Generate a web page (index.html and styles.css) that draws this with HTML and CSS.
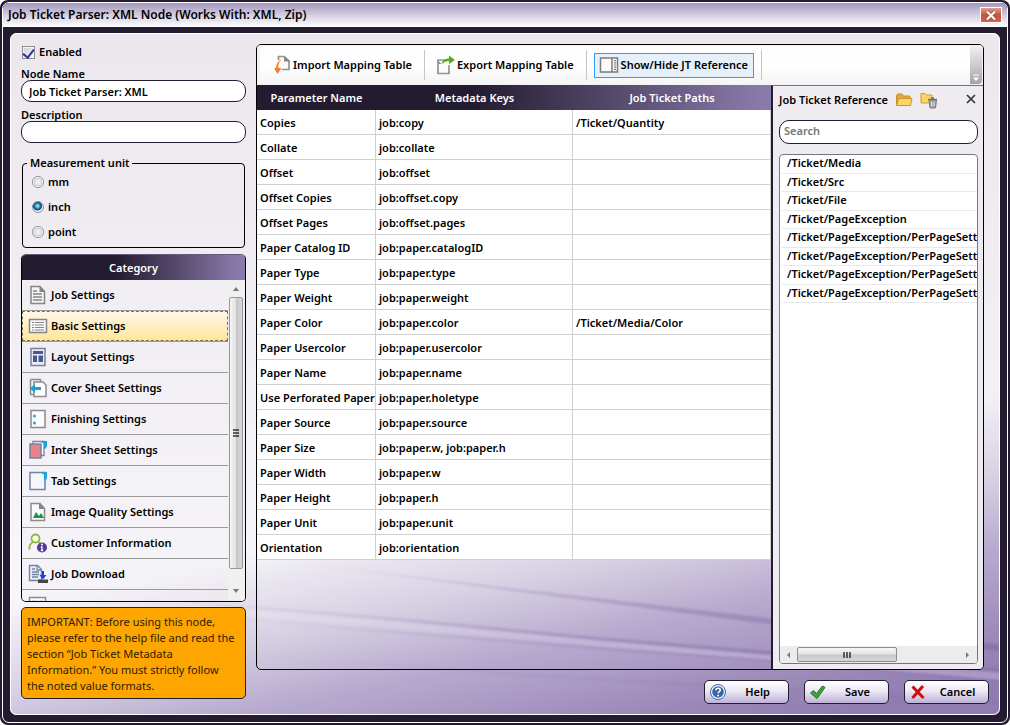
FILE: index.html
```html
<!DOCTYPE html>
<html lang="en">
<head>
<meta charset="utf-8">
<title>Job Ticket Parser: XML Node</title>
<link rel="stylesheet" href="styles.css">
</head>
<body>
<div class="window">
<div class="frame">
  <header class="titlebar">
    <h1>Job Ticket Parser: XML Node (Works With: XML, Zip)</h1>
    <button class="close" type="button" aria-label="Close window"><svg width="12" height="11" viewBox="0 0 12 11"><path d="M2 1.5l8 8M10 1.5l-8 8" stroke="#8a4a44" stroke-width="3.6"/><path d="M2 1.5l8 8M10 1.5l-8 8" stroke="#fff" stroke-width="2.2"/></svg></button>
  </header>

  <main class="content">
    <svg class="backdrop" viewBox="10 33 990 682" preserveAspectRatio="none" aria-hidden="true">
      <defs>
        <linearGradient id="top" x1="0" y1="0" x2="0" y2="1"><stop offset="0" stop-color="#ece7ec"/><stop offset=".35" stop-color="#f0edf2"/><stop offset=".8" stop-color="#f7f6fa"/></linearGradient>
        <linearGradient id="violet" gradientUnits="userSpaceOnUse" x1="0" y1="600" x2="63" y2="886">
          <stop offset="0" stop-color="#f4f3f7" stop-opacity="0"/><stop offset=".1" stop-color="#edeaf2"/><stop offset=".33" stop-color="#d6cfe2"/><stop offset=".55" stop-color="#b8abcf"/><stop offset=".72" stop-color="#a898c3"/><stop offset=".85" stop-color="#9b89b7"/><stop offset="1" stop-color="#917cb2"/>
        </linearGradient>
        <linearGradient id="streak" x1="0" y1="0" x2="1" y2="0"><stop offset="0" stop-color="#8874a8" stop-opacity=".05"/><stop offset="1" stop-color="#7f6ba3" stop-opacity=".65"/></linearGradient>
        <linearGradient id="shine" x1="0" y1="0" x2="1" y2="0"><stop offset="0" stop-color="#fff" stop-opacity=".1"/><stop offset="1" stop-color="#cfc0e4" stop-opacity=".4"/></linearGradient>
        <filter id="soft" x="-5%" y="-20%" width="110%" height="140%"><feGaussianBlur stdDeviation="1.1"/></filter>
      </defs>
      <rect x="10" y="33" width="990" height="682" fill="url(#top)"/>
      <rect x="10" y="33" width="990" height="682" fill="url(#violet)"/>
      <g filter="url(#soft)">
        <path d="M300 563L520 589 760 617 1000 645V651L760 623 520 592Z" fill="url(#streak)"/>
        <path d="M190 601L400 618 600 637 760 650 1000 669V674L760 655 600 641 400 621 190 604Z" fill="url(#streak)"/>
        <path d="M190 605L400 623 600 641 760 654 1000 672V680L760 659 600 646 400 629 190 611Z" fill="url(#shine)"/>
        <path d="M190 615L400 631 600 647 760 659 1000 680V682L760 661 600 650 400 634Z" fill="url(#streak)" opacity=".6"/>
        <path d="M200 650L500 672 1000 701V704L500 675Z" fill="url(#streak)" opacity=".4"/>
      </g>
    </svg>

    <aside class="side">
      <label class="check"><input type="checkbox" checked><span>Enabled</span></label>
      <label class="caption" for="node">Node Name</label>
      <input class="field" id="node" type="text" value="Job Ticket Parser: XML">
      <label class="caption" for="desc">Description</label>
      <input class="field" id="desc" type="text">
      <fieldset class="units">
        <legend>Measurement unit</legend>
        <label><input type="radio" name="unit"><span>mm</span></label>
        <label><input type="radio" name="unit" checked><span>inch</span></label>
        <label><input type="radio" name="unit"><span>point</span></label>
      </fieldset>

      <section class="category">
        <h2>Category</h2>
        <div class="category-body">
          <ul>
            <li><button type="button"><svg viewBox="0 0 20 20"><path d="M3 1.500h9l4.500 5v12H3z" fill="#f4f4f4" stroke="#858585" stroke-width="1.500"/><path d="M11.500 1v6h5.500z" fill="#858585"/><path d="M5 6h4M5 9h9M5 12h9M5 15h9" stroke="#858585" stroke-width="1.500"/></svg>Job Settings</button></li>
            <li><button type="button" class="selected"><svg viewBox="0 0 20 20"><rect x="1.500" y="3.500" width="17" height="13" fill="#fafafa" stroke="#858585" stroke-width="1.500"/><path d="M4 6.500h2M4 9h2M4 11.500h2M4 14h2M7 6.500h9M7 9h9M7 11.500h9M7 14h9" stroke="#858585" stroke-width="1.200"/></svg>Basic Settings</button></li>
            <li><button type="button"><svg viewBox="0 0 20 20"><rect x="3" y="1.500" width="14" height="17" fill="#e8edf5" stroke="#7482a5" stroke-width="1.500"/><path d="M5 4h10v3H5zM5 8.500h4V15H5zM10.500 8.500H15V15h-4.500z" fill="#465a91"/></svg>Layout Settings</button></li>
            <li><button type="button"><svg viewBox="0 0 20 20"><path d="M2.500 1.500h10v2M2.500 1.500v15H7" fill="none" stroke="#8b8b8b" stroke-width="1.500"/><path d="M6 4h9l3 3v11.500H6z" fill="#fff" stroke="#8b8b8b" stroke-width="1.500"/><path d="M2 10.500l5-4.500v3h6v3H7v3z" fill="#259dce"/></svg>Cover Sheet Settings</button></li>
            <li><button type="button"><svg viewBox="0 0 20 20"><rect x="3" y="1.500" width="14" height="17" fill="#fcfcfc" stroke="#8b8b8b" stroke-width="1.500"/><circle cx="6.500" cy="7" r="1.500" fill="#26a2d6"/><circle cx="6.500" cy="14" r="1.500" fill="#26a2d6"/></svg>Finishing Settings</button></li>
            <li><button type="button"><svg viewBox="0 0 20 20"><path d="M5 1.500h11v14H5z" fill="#fff" stroke="#7482a5" stroke-width="1.300"/><path d="M14 1h5v4q0 3-3 4V3h-2z" fill="#22a2da"/><rect x="2" y="4" width="11" height="14" fill="#e78489" stroke="#7482a5" stroke-width="1.500"/></svg>Inter Sheet Settings</button></li>
            <li><button type="button"><svg viewBox="0 0 20 20"><rect x="2" y="1.500" width="15" height="17" fill="#f3f7fc" stroke="#7482a5" stroke-width="1.500"/><path d="M14 1h5v5q0 3-3 4V3h-2z" fill="#22a2da"/></svg>Tab Settings</button></li>
            <li><button type="button"><svg viewBox="0 0 20 20"><path d="M3 1.500h9l4.500 5v12H3z" fill="#fafafa" stroke="#8b8b8b" stroke-width="1.500"/><path d="M11 1v6h6z" fill="#858585"/><path d="M5 16l3-6 3 4 2-3 3 5z" fill="#14964b"/></svg>Image Quality Settings</button></li>
            <li><button type="button"><svg viewBox="0 0 20 20"><circle cx="7.500" cy="5.500" r="4" fill="#fff" stroke="#8bb93a" stroke-width="1.800"/><path d="M5 9q-4 2-3.500 7.500M10 9l2 1" fill="none" stroke="#8bb93a" stroke-width="1.800"/><circle cx="14" cy="14.500" r="5" fill="#553998"/><path d="M14 13.500v4M12.800 17.500h2.400M12.800 14H14" stroke="#fff" stroke-width="1.300"/><circle cx="14" cy="11.500" r="1" fill="#fff"/></svg>Customer Information</button></li>
            <li><button type="button"><svg viewBox="0 0 20 20"><path d="M1.500 1.500h8l4 4v11h-12z" fill="#e8eef6" stroke="#7482a5" stroke-width="1.400"/><path d="M9 1v5h5M4 5h3M4 8h7M4 10.500h7M4 13h6" fill="none" stroke="#7482a5" stroke-width="1.300"/><path d="M14 7h2v4h2.500L15 15.500 11.500 11H14z" fill="#1440ec"/><path d="M10 15.500h10V19H10z" fill="#444"/></svg>Job Download</button></li>
            <li><button type="button" aria-label="More settings"><svg viewBox="0 0 20 20"><rect x="1.500" y="2.500" width="16" height="15" fill="#fafafa" stroke="#8b8b8b" stroke-width="1.500"/><path d="M4 6.500h5M11 6.500h4" stroke="#8b8b8b" stroke-width="1.500"/></svg></button></li>
          </ul>
          <div class="vbar">
            <svg width="8" height="5" viewBox="0 0 8 5"><path d="M1 5l3-4 3 4z" fill="#777"/></svg>
            <div class="vthumb"><svg width="8" height="9" viewBox="0 0 8 9"><path d="M1 1h6M1 4h6M1 7h6" stroke="#333" stroke-width="1.500"/></svg></div>
            <svg width="8" height="5" viewBox="0 0 8 5"><path d="M1 0l3 4 3-4z" fill="#777"/></svg>
          </div>
        </div>
      </section>

      <p class="note">IMPORTANT: Before using this node, please refer to the help file and read the section “Job Ticket Metadata Information.” You must strictly follow<br>the noted value formats.</p>
    </aside>

    <div class="work">
      <section class="panel">
        <div class="toolbar">
          <div class="tools">
            <button type="button"><svg width="18" height="20" viewBox="0 0 18 20"><path d="M4.500 5V1.500H10l5 4.500v8.500H8" fill="#fafafa" stroke="#929292" stroke-width="1.700"/><path d="M10 1v5.500h6z" fill="#858585"/><path d="M8 4Q3.500 8 4.500 13h3L3.500 19 0 13h2Q2 7 8 4z" fill="#ef812f"/></svg>Import Mapping Table</button>
            <span class="sep"></span>
            <button type="button"><svg width="20" height="20" viewBox="0 0 20 20"><path d="M9 5H2v13.500h11V10" fill="#fafafa" stroke="#929292" stroke-width="1.700"/><path d="M1.500 5v4h4z" fill="#929292"/><path d="M5.500 9Q7 3.500 13 3.500V.5l6 4.500-6 4v-3Q9 6 5.500 9z" fill="#58a81e"/></svg>Export Mapping Table</button>
            <span class="sep"></span>
            <button type="button" class="on"><svg width="20" height="20" viewBox="0 0 20 20"><rect x="1.500" y="3" width="17" height="14" fill="#fafafa" stroke="#7b7b7b" stroke-width="1.500"/><path d="M13 3v14" stroke="#7b7b7b" stroke-width="1.500"/><path d="M16 5v11" stroke="#555" stroke-width="1.500" stroke-dasharray="1.200 1"/></svg>Show/Hide JT Reference</button>
            <span class="sep"></span>
          </div>
          <div class="overflow"><svg width="8" height="8" viewBox="0 0 8 8"><path d="M1 1h6" stroke="#fff"/><path d="M1 3.500h6L4 7z" fill="#fff"/></svg></div>
        </div>
        <div class="split">
          <div class="mapping">
            <table>
              <thead><tr><th class="c1">Parameter Name</th><th class="c2">Metadata Keys</th><th>Job Ticket Paths</th></tr></thead>
              <tbody>
                <tr><td>Copies</td><td>job:copy</td><td>/Ticket/Quantity</td></tr>
                <tr><td>Collate</td><td>job:collate</td><td></td></tr>
                <tr><td>Offset</td><td>job:offset</td><td></td></tr>
                <tr><td>Offset Copies</td><td>job:offset.copy</td><td></td></tr>
                <tr><td>Offset Pages</td><td>job:offset.pages</td><td></td></tr>
                <tr><td>Paper Catalog ID</td><td>job:paper.catalogID</td><td></td></tr>
                <tr><td>Paper Type</td><td>job:paper.type</td><td></td></tr>
                <tr><td>Paper Weight</td><td>job:paper.weight</td><td></td></tr>
                <tr><td>Paper Color</td><td>job:paper.color</td><td>/Ticket/Media/Color</td></tr>
                <tr><td>Paper Usercolor</td><td>job:paper.usercolor</td><td></td></tr>
                <tr><td>Paper Name</td><td>job:paper.name</td><td></td></tr>
                <tr><td>Use Perforated Paper</td><td>job:paper.holetype</td><td></td></tr>
                <tr><td>Paper Source</td><td>job:paper.source</td><td></td></tr>
                <tr><td>Paper Size</td><td>job:paper.w, job:paper.h</td><td></td></tr>
                <tr><td>Paper Width</td><td>job:paper.w</td><td></td></tr>
                <tr><td>Paper Height</td><td>job:paper.h</td><td></td></tr>
                <tr><td>Paper Unit</td><td>job:paper.unit</td><td></td></tr>
                <tr><td>Orientation</td><td>job:orientation</td><td></td></tr>
              </tbody>
            </table>
          </div>
          <aside class="reference">
            <div class="ref-head">
              <h2>Job Ticket Reference</h2>
              <button type="button" aria-label="Open folder"><svg width="18" height="16" viewBox="0 0 18 16"><path d="M1.500 13.500V3.500l1-1.500H7l1.500 2H15v3" fill="#e6a935" stroke="#c28d2c"/><path d="M1.500 13.500L4 6.500h13l-1.500 7z" fill="#fcd467" stroke="#cf9430"/></svg></button>
              <button type="button" aria-label="Delete folder"><svg width="18" height="17" viewBox="0 0 18 17"><path d="M1 11V1.500h4L6.500 3H12v8z" fill="#fcd264" stroke="#d39a34"/><path d="M8 7.500h9M11 6h3" stroke="#777" stroke-width="1.500"/><path d="M9 8h7.500l-1 8h-5.500z" fill="#a5a8ad" stroke="#777"/><path d="M11.500 10v4M14 10v4" stroke="#ddd"/></svg></button>
              <button type="button" class="dismiss" aria-label="Close reference"><svg width="10" height="10" viewBox="0 0 10 10"><path d="M1 1l8 8M9 1L1 9" stroke="#333" stroke-width="1.700"/></svg></button>
            </div>
            <input class="field search" type="text" placeholder="Search" aria-label="Search">
            <div class="ref-list">
              <ul>
                <li>/Ticket/Media</li>
                <li>/Ticket/Src</li>
                <li>/Ticket/File</li>
                <li>/Ticket/PageException</li>
                <li>/Ticket/PageException/PerPageSetting</li>
                <li>/Ticket/PageException/PerPageSetting</li>
                <li>/Ticket/PageException/PerPageSetting</li>
                <li>/Ticket/PageException/PerPageSetting</li>
              </ul>
              <div class="hbar">
                <svg width="5" height="8" viewBox="0 0 5 8"><path d="M4 1v6L1 4z" fill="#777"/></svg>
                <div class="htrack"><div class="hthumb"><svg width="9" height="8" viewBox="0 0 9 8"><path d="M1 1v6M4 1v6M7 1v6" stroke="#333" stroke-width="1.500"/></svg></div></div>
                <svg width="5" height="8" viewBox="0 0 5 8"><path d="M1 1v6l3-3z" fill="#777"/></svg>
              </div>
            </div>
          </aside>
        </div>
      </section>
      <footer class="actions">
        <button type="button"><svg width="18" height="18" viewBox="0 0 18 18"><circle cx="9" cy="9" r="7.500" fill="#f5f8fc" stroke="#3d66a3" stroke-width="1"/><circle cx="9" cy="9" r="5.800" fill="#3766a9"/><path d="M6.800 7.300Q7 5.200 9.100 5.200q2.200 0 2.200 1.900 0 1-1.200 1.700-1 .6-1 1.500" fill="none" stroke="#fff" stroke-width="1.500"/><circle cx="9.100" cy="12.400" r="1" fill="#fff"/></svg><span>Help</span></button>
        <button type="button"><svg width="18" height="18" viewBox="0 0 18 18"><path d="M1.500 10l3-2.500 3 3L13.500 3 16 4.500 8 15.500z" fill="#3ba339" stroke="#237326"/></svg><span>Save</span></button>
        <button type="button"><svg width="18" height="18" viewBox="0 0 18 18"><path d="M3.500 3.500l11 11.500M14 3L3.500 15" stroke="#cc1010" stroke-width="3"/></svg><span>Cancel</span></button>
      </footer>
    </div>
  </main>
</div>
</div>
</body>
</html>
```
FILE: styles.css
```css
* { box-sizing: border-box; }
body { margin: 0; background: #fff; color: #000; font: 600 11px/16px "Noto Sans", "Open Sans", sans-serif; }
button, input { font: inherit; color: inherit; }
button { cursor: pointer; }
button, h1, h2, ul, p { margin: 0; padding: 0; }
ul { list-style: none; }
h1, h2 { font-size: 11px; line-height: 16px; font-weight: 600; }
svg { display: block; flex: none; }

.window { display: flex; min-height: 100vh; padding: 2px; background: #231b30; border-radius: 8px; }
.frame { display: flex; flex: 1; flex-direction: column; min-width: 0; border: 1px solid #fff; border-radius: 7px; overflow: hidden; }
.titlebar { display: flex; align-items: center; justify-content: space-between; height: 24px; padding: 0 5px; background: linear-gradient(#a397bd, #d3cde0 50%, #fff); }
.titlebar h1 { font-size: 12px; }
.close { display: flex; align-items: center; justify-content: center; width: 22px; height: 16px; border: 1px solid #fff; background: linear-gradient(#e0a090, #c5523c 50%, #d0644c); }

.content { position: relative; display: flex; flex: 1; gap: 10px; margin: 6px 7px 7px; padding: 11px 16px 11px 11px; border-radius: 7px; overflow: hidden; background: #efecf1; }
.content::after { content: ""; position: absolute; inset: 0; border: 1px solid #fff; border-radius: 7px; pointer-events: none; }
.backdrop { position: absolute; inset: 0; width: 100%; height: 100%; }

.side { position: relative; display: flex; flex: 0 0 225px; flex-direction: column; padding-bottom: 5px; }
.check, .units label { display: flex; align-items: center; }
.check { gap: 4px; margin-bottom: 6px; }
.check input { appearance: none; width: 13px; height: 13px; margin: 0 0 0 1px; border: 1px solid #8e8f8f; background: linear-gradient(135deg, #ccd0da, #f8f8fa); box-shadow: inset 0 0 0 1px #f4f4f4; display: grid; place-items: center; }
.check input:checked::after { content: ""; width: 5px; height: 9px; margin-bottom: 2px; border: solid #31349b; border-width: 0 2px 2px 0; transform: rotate(38deg); }
.caption { margin-bottom: -2px; }
.field { width: 100%; height: 22px; padding: 0 7px; border: 1px solid #231b30; border-radius: 10px; background: #fff; outline: 0; }
.caption + .field { margin-bottom: 5px; }
.units { min-width: 0; margin: 7px 1px 6px; padding: 0 0 3px 9px; border: 1px solid #000; border-radius: 4px; }
.units legend { margin: -1px 0 -2px -5px; padding: 0 3px; }
.units label { height: 25px; gap: 4px; }
.units input { appearance: none; width: 12px; height: 12px; margin: 0; border: 1px solid #8e8f8f; border-radius: 50%; background: radial-gradient(#eee 35%, #c9ccd0 50%, #fff 65%); }
.units input:checked { background: radial-gradient(circle at 45% 40%, #9be4f8 5%, #1d7fb4 35%, #0b3a64 50%, #f4f4f4 60%); }

.category { display: flex; flex: 1 1 0; flex-direction: column; min-height: 0; border: 1px solid #000; border-top-color: #665a75; border-radius: 5px; overflow: hidden; }
.category h2 { flex: none; height: 25px; line-height: 26px; text-align: center; color: #fff; background: linear-gradient(90deg, #231b30 42%, #8a7aaa 97%); }
.category-body { display: flex; flex: 1; min-height: 0; background: #f3f1f466; }
.category ul { flex: 1; overflow: hidden; }
.category li { border-bottom: 1px solid #9b9b9b; }
.category li button { display: flex; align-items: center; gap: 3px; width: 100%; height: 30px; padding: 0 6px; border: 0; background: none; text-align: left; }
.category li svg { width: 20px; height: 20px; }
.category li .selected { background: linear-gradient(#fff8ea, #ffe49b); outline: 1px dashed #776f55; outline-offset: -1px; }
.vbar { display: flex; flex: 0 0 17px; flex-direction: column; align-items: center; justify-content: space-between; gap: 6px; padding: 6px 2px 7px 1px; background: #f0f0f0; }
.vthumb { display: flex; flex: 1; align-items: center; justify-content: center; width: 14px; margin-bottom: 14px; border: 1px solid #979797; border-radius: 2px; background: linear-gradient(90deg, #f6f6f6, #e2e2e2 48%, #c6c6c9 52%, #d8d8da); }

.note { flex: none; margin-top: 5px; padding: 6px 2px 4px 5px; border: 1px solid #231b30; border-radius: 5px; background: #ffa500; font-weight: 400; color: #2c1d05; }

.work { position: relative; display: flex; flex: 1; flex-direction: column; gap: 10px; min-width: 0; }
.panel { display: flex; flex: 1; flex-direction: column; border: 1px solid #000; border-radius: 5px; overflow: hidden; }
.toolbar { display: flex; height: 40px; padding: 1px 1px 1px 3px; background: #f3f1f4; }
.tools { display: flex; flex: 1; align-items: center; padding-left: 10px; border-radius: 3px; background: linear-gradient(#fdfcfe, #fff 50%, #f5f4f6); }
.tools button { display: flex; align-items: center; gap: 1px; height: 25px; padding: 0 4px 0 3px; border: 1px solid transparent; background: none; white-space: nowrap; }
.tools .on { gap: 2px; padding: 0 5px 0 4px; border-color: #3399ff; background: #e5f0fa; }
.sep { width: 1px; height: 30px; margin: 0 7px; background: #c5c5c5; }
.overflow { display: flex; align-items: flex-end; justify-content: center; width: 12px; padding-bottom: 2px; border-radius: 0 4px 4px 0; background: linear-gradient(#f0f0f0, #c4c4c4 60%, #a4a4a4); }
.split { display: flex; flex: 1; min-height: 0; }
.mapping { flex: 1; min-width: 0; }
table { width: 100%; table-layout: fixed; border-collapse: separate; border-spacing: 0; }
.c1 { width: 119px; }
.c2 { width: 197px; }
thead tr { background: linear-gradient(90deg, #231b30 42%, #8a7aaa 98%); }
th { height: 25px; padding: 0; color: #fff; font-weight: 600; }
td { height: 25px; padding: 2px 3px 0; border: solid #d0d0d0; border-width: 0 1px 1px 0; background: #fff; white-space: nowrap; }
.reference { display: flex; flex: 0 0 212px; flex-direction: column; min-width: 0; padding: 5px 5px 5px 6px; border-left: 2px solid #231b30; border-top: 1px solid #777; background: #efecf1; }
.ref-head { display: flex; align-items: center; gap: 7px; height: 18px; margin-bottom: 11px; white-space: nowrap; }
.ref-head button { border: 0; background: none; }
.ref-head .dismiss { margin: 0 2px 3px auto; }
.search { flex: none; height: 24px; margin-bottom: 10px; padding: 0 4px 3px; }
.search::placeholder { color: #757575; opacity: 1; }
.ref-list { display: flex; flex: 1; flex-direction: column; justify-content: space-between; border: 1px solid #777; border-radius: 4px; background: #fff; overflow: hidden; }
.ref-list li { height: 18px; margin-left: 2px; padding-left: 5px; border-bottom: 1px solid #e8e8e8; white-space: nowrap; }
.ref-list li:nth-child(odd) { height: 19px; }
.hbar { display: flex; align-items: center; gap: 6px; height: 17px; padding: 0 7px 0 6px; background: #ececec; }
.htrack { flex: 1; }
.hthumb { display: flex; align-items: center; justify-content: center; width: 62%; height: 15px; border: 1px solid #8f8f8f; border-radius: 2px; background: linear-gradient(#f6f6f6, #e4e4e4 48%, #c8c8cb 52%, #d6d6d8); }

.actions { display: flex; justify-content: flex-end; gap: 15px; margin-right: -5px; }
.actions button { display: flex; align-items: center; width: 85px; height: 24px; padding: 0 4px; border: 1px solid #231b30; border-radius: 5px; background: linear-gradient(#fff, #ece8f4 45%, #bdb1d9); }
.actions span { flex: 1; padding-left: 4px; text-align: center; }
```
